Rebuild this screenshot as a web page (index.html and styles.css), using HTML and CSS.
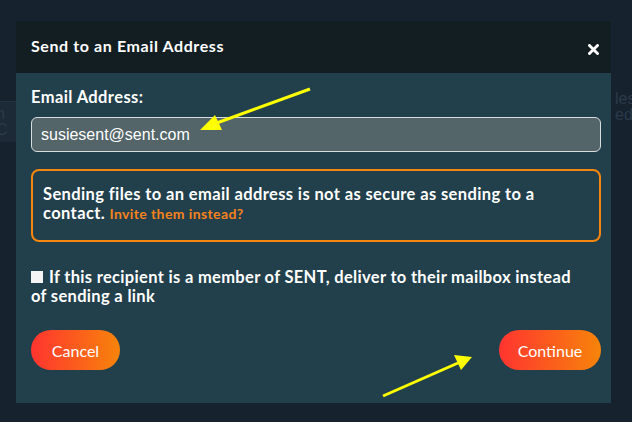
FILE: index.html
```html
<!DOCTYPE html>
<html>
<head>
<meta charset="utf-8">
<link rel="stylesheet" href="styles.css">
</head>
<body>
<div class="page">
  <div class="bg-left"><span class="ghost">h C</span></div>
  <div class="modal">
    <div class="modal-head">
      <h2 class="title">Send to an Email Address</h2>
      <svg class="close" width="11" height="11" viewBox="0 0 11 11"><path d="M1.5 1.5 L9.5 9.5 M9.5 1.5 L1.5 9.5" stroke="#fff" stroke-width="2.8" stroke-linecap="square"/></svg>
    </div>
    <div class="modal-body">
      <div class="label">Email Address:</div>
      <div class="input">susiesent@sent.com</div>
      <div class="warn">Sending files to an email address is not as secure as sending to a contact. <span class="invite">Invite them instead?</span></div>
      <div class="check"><span class="box"></span>If this recipient is a member of SENT, deliver to their mailbox instead of sending a link</div>
      <div class="actions">
        <button class="btn btn-cancel">Cancel</button>
        <button class="btn btn-continue">Continue</button>
      </div>
    </div>
  </div>
  <div class="bg-right"><span class="ghost">les</span><span class="ghost">ed c</span></div>
</div>
<svg class="arrows" width="632" height="422" viewBox="0 0 632 422">
  <line x1="310" y1="89" x2="214" y2="124" stroke="#ffff00" stroke-width="3"/>
  <polygon points="200,130 215,115 222,130" fill="#ffff00"/>
  <line x1="383" y1="396" x2="458" y2="363" stroke="#ffff00" stroke-width="3"/>
  <polygon points="472,357 454,355 461,370" fill="#ffff00"/>
</svg>
</body>
</html>
```
FILE: styles.css
```css
html, body {
  margin: 0;
  padding: 0;
  background: #17222f;
  width: 632px;
  height: 422px;
  overflow: hidden;
}
body {
  position: relative;
  font-family: Lato, "Noto Sans", sans-serif;
}
.page {
  display: flex;
  align-items: flex-start;
  padding-top: 21px;
}
.bg-left {
  flex: 0 0 16px;
  margin-top: 80px;
  height: 40px;
  background: #1c2a37;
  border-top: 1px solid #243443;
  overflow: hidden;
  display: flex;
  align-items: center;
}
.bg-right {
  flex: 1 1 0;
  min-width: 0;
  margin-top: 70px;
  padding-left: 4px;
  display: flex;
  flex-direction: column;
  overflow: hidden;
  white-space: nowrap;
}
.ghost {
  font-family: "Liberation Sans", Arial, sans-serif;
  font-size: 16px;
  color: #2a3a4a;
  line-height: 16px;
}
.bg-left .ghost { margin-left: -4px; }
.modal {
  flex: 0 0 595px;
  width: 595px;
  height: 382px;
  background: #22404c;
  display: flex;
  flex-direction: column;
}
.modal-head {
  height: 52px;
  background: #131e23;
  display: flex;
  align-items: center;
  justify-content: space-between;
  padding: 0 12px 0 15px;
}
.title {
  margin: 0;
  color: #fff;
  font-size: 16px;
  font-weight: 700;
  letter-spacing: 0.6px;
  line-height: 20px;
  margin-top: -2px;
}
.close {
  margin-top: 5px;
}
.modal-body {
  padding: 15px 10px 0 15px;
  display: flex;
  flex-direction: column;
}
.label {
  color: #fff;
  font-weight: 700;
  font-size: 16.5px;
  letter-spacing: 0.4px;
  line-height: 19px;
}
.input {
  margin-top: 10px;
  height: 33px;
  border: 1px solid #d8dcdc;
  border-radius: 6px;
  background: #546569;
  color: #fff;
  font-family: "Liberation Sans", Arial, sans-serif;
  font-size: 16px;
  line-height: 33px;
  padding-left: 9px;
}
.warn {
  margin-top: 17px;
  border: 2px solid #f5870f;
  border-radius: 8px;
  padding: 14px 10px 17px 10px;
  color: #fff;
  font-weight: 700;
  font-size: 16.5px;
  letter-spacing: 0.38px;
  line-height: 19px;
}
.invite {
  color: #f5821c;
  font-size: 14px;
  letter-spacing: 0.4px;
  line-height: 1;
}
.check {
  margin-top: 26px;
  color: #fff;
  font-weight: 700;
  font-size: 16.5px;
  letter-spacing: 0.32px;
  line-height: 19px;
  padding-right: 20px;
}
.box {
  display: inline-block;
  width: 12px;
  height: 12px;
  background: #f4f4f4;
  margin-right: 6px;
  vertical-align: 0;
}
.actions {
  margin-top: 24px;
  display: flex;
  justify-content: space-between;
}
.btn {
  height: 40px;
  border: none;
  border-radius: 20px;
  background: linear-gradient(to right, #ff3430, #f7840a);
  color: #fff;
  font-family: Lato, "Noto Sans", sans-serif;
  font-size: 16px;
  font-weight: 400;
  padding: 0;
}
.btn-cancel { width: 89px; }
.btn-continue { width: 102px; }
.arrows {
  position: absolute;
  left: 0;
  top: 0;
  pointer-events: none;
}
```
